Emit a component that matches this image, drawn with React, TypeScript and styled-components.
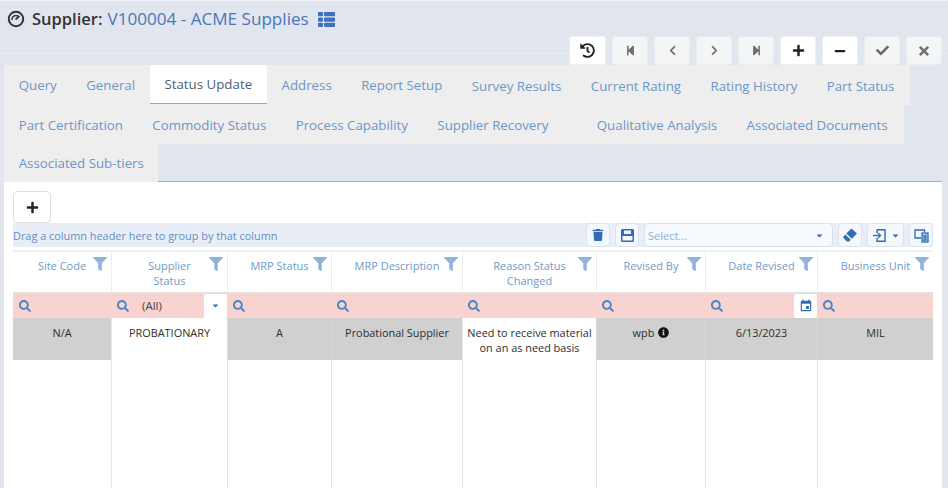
import React from "react";
import styled, { createGlobalStyle } from "styled-components";
import {
  FaCaretDown,
  FaCheck,
  FaChevronLeft,
  FaChevronRight,
  FaFilter,
  FaHistory,
  FaInfoCircle,
  FaMinus,
  FaPlus,
  FaSearch,
  FaStepBackward,
  FaStepForward,
  FaThList,
  FaTimes,
  FaTrash,
} from "react-icons/fa";
import { MdEvent } from "react-icons/md";

const GlobalStyle = createGlobalStyle`
  html, body {
    margin: 0;
    padding: 0;
    height: 100%;
  }
  body {
    font-family: "Open Sans", "Liberation Sans", sans-serif;
    overflow: hidden;
  }
  #root {
    height: 100%;
  }
`;

const Page = styled.div`
  width: 948px;
  height: 488px;
  background: #e1e6ee;
  border-top: 1px solid #f1f3f6;
  box-sizing: border-box;
  display: flex;
  flex-direction: column;
  overflow: hidden;
`;

const TitleRow = styled.div`
  height: 53px;
  box-sizing: border-box;
  padding: 8px 0 0 7px;
  display: flex;
  align-items: flex-start;
  border-bottom: 1px solid #e9edf3;
  line-height: 20px;
`;

const TitleGauge = styled.span`
  display: flex;
  padding-top: 1px;
`;

const TitleLabel = styled.span`
  font-size: 16.5px;
  font-weight: 600;
  color: #333;
  margin: 0 5px 0 7px;
`;

const TitleValue = styled.span`
  font-size: 17.1px;
  color: #4a76b8;
  margin-right: 9px;
`;

const TitleIcon = styled.span`
  display: flex;
  color: #3f6fbd;
  font-size: 17px;
  padding-top: 2px;
`;

const Toolbar = styled.div`
  display: flex;
  justify-content: flex-end;
  gap: 6px;
  padding-right: 6px;
  margin-top: -18px;
  height: 29px;
`;

const ToolButton = styled.button<{ $active?: boolean; $wide?: boolean }>`
  width: ${(p) => (p.$wide ? "37px" : "36px")};
  height: 29px;
  padding: 0;
  border: 1px solid ${(p) => (p.$active ? "#f0f1f3" : "#e9ebef")};
  border-radius: 3px;
  background: ${(p) => (p.$active ? "#fff" : "#f4f5f7")};
  color: ${(p) => (p.$active ? "#222" : "#6f6f6f")};
  display: flex;
  align-items: center;
  justify-content: center;
  font-size: 13px;
`;

const TabRow = styled.div<{ $end: number; $height: number; $over?: boolean }>`
  width: ${(p) => p.$end - 4}px;
  height: ${(p) => p.$height}px;
  margin: 0 0 ${(p) => (p.$over ? "-1px" : "0")} 4px;
  position: ${(p) => (p.$over ? "relative" : "static")};
  background: #eeeeee;
  font-size: 13.3px;
  display: flex;
  flex-shrink: 0;
`;

const Tab = styled.div<{ $active?: boolean; $gap?: number; $low?: boolean }>`
  padding: ${(p) => (p.$low ? "2px" : "0")} 14.7px 0;
  margin-left: ${(p) => p.$gap ?? 0}px;
  display: flex;
  align-items: center;
  white-space: nowrap;
  color: ${(p) => (p.$active ? "#4d5f75" : "#6c97c8")};
  background: ${(p) => (p.$active ? "#fff" : "transparent")};
  border-bottom: ${(p) => (p.$active ? "1px solid #8aaad4" : "none")};
  border-radius: ${(p) => (p.$active ? "3px 3px 0 0" : "0")};
  height: ${(p) => (p.$active ? "38px" : "auto")};
`;

const Panel = styled.div`
  flex: 1;
  min-height: 0;
  margin: 0 6px 0 4px;
  padding: 9px 9px 0;
  background: #fff;
  border-top: 1px solid #98b2d6;
  display: flex;
  flex-direction: column;
`;

const AddButton = styled.button`
  width: 38px;
  height: 32px;
  padding: 0;
  flex-shrink: 0;
  border: 1px solid #dcdfe4;
  border-radius: 4px;
  background: #fff;
  color: #222;
  font-size: 13px;
  display: flex;
  align-items: center;
  justify-content: center;
`;

const GroupBar = styled.div`
  height: 24px;
  flex-shrink: 0;
  background: #e9eef6;
  display: flex;
  align-items: center;
  gap: 5px;
`;

const GroupHint = styled.span`
  flex: 1;
  font-size: 10.9px;
  color: #5f8ec8;
  white-space: nowrap;
`;

const BarButton = styled.button<{ $width: number }>`
  width: ${(p) => p.$width}px;
  height: 24px;
  padding: 0;
  box-sizing: border-box;
  border: 1px solid #dbe3ee;
  border-radius: 4px;
  background: #f4f7fb;
  color: #2f6db5;
  font-size: 12px;
  display: flex;
  align-items: center;
  justify-content: center;
  gap: 4px;
`;

const SelectBox = styled.div`
  width: 189px;
  height: 24px;
  box-sizing: border-box;
  padding: 0 8px 0 3px;
  border: 1px solid #d5e2f2;
  border-radius: 4px;
  background: #f6f9fd;
  color: #8fb0dc;
  font-size: 11px;
  display: flex;
  align-items: center;
  justify-content: space-between;
`;

const Caret = styled.span`
  display: flex;
  font-size: 9px;
  color: #2f6db5;
`;

const Table = styled.div`
  flex: 1;
  min-height: 0;
  margin-top: 3px;
  border-top: 2px solid #f1f1f1;
  display: grid;
  grid-template-columns: 98px 116px 104px 131px 134px 109px 112px 116px;
  grid-template-rows: 41px 25px 42px 1fr;
`;

const HeadCell = styled.div<{ $first?: boolean }>`
  box-sizing: border-box;
  padding: 4px 4px 0 18px;
  display: flex;
  align-items: flex-start;
  border-left: ${(p) => (p.$first ? "none" : "1px solid #ececec")};
  border-bottom: 1px solid #e4e4e4;
`;

const HeadText = styled.span`
  flex: 1;
  text-align: center;
  white-space: pre-line;
  font-size: 11px;
  line-height: 15px;
  color: #6f9ac9;
  padding-top: 2px;
`;

const FunnelIcon = styled.span`
  display: flex;
  color: #8fb3dc;
  font-size: 14px;
  padding-top: 1px;
`;

const FilterCell = styled.div`
  background: #f9d3cf;
  display: flex;
  align-items: center;
  padding-left: 6px;
  font-size: 12px;
  color: #444;
`;

const SearchIcon = styled.span`
  display: flex;
  color: #4a85c5;
  font-size: 12px;
`;

const FilterValue = styled.span`
  flex: 1;
  margin-left: 13px;
  font-size: 11.5px;
`;

const FilterAddon = styled.span`
  width: 23px;
  height: 24px;
  margin-left: auto;
  background: #fff;
  border-radius: 2px;
  color: #2f6db5;
  display: flex;
  align-items: center;
  justify-content: center;
`;

const DataCell = styled.div<{ $plain?: boolean; $first?: boolean }>`
  box-sizing: border-box;
  padding: 7px 2px 0;
  text-align: center;
  white-space: pre-line;
  font-size: 10.9px;
  line-height: 15px;
  color: #2e2e2e;
  background: ${(p) => (p.$plain ? "#fff" : "#d0d0d0")};
  border-left: ${(p) =>
    p.$first ? "none" : `1px solid ${p.$plain ? "#e6e6e6" : "#dadada"}`};
`;

const InfoIcon = styled.span`
  display: inline-flex;
  vertical-align: -1px;
  margin-left: 4px;
  font-size: 11px;
  color: #111;
`;

const EmptyCell = styled.div<{ $first?: boolean }>`
  border-left: ${(p) => (p.$first ? "none" : "1px solid #e6e6e6")};
`;

const GaugeIcon = () => (
  <svg width="18" height="18" viewBox="0 0 18 18" fill="none" stroke="#333">
    <circle cx="9" cy="9" r="7.2" strokeWidth="2" />
    <path d="M5 10a4 4 0 0 1 6-4" strokeWidth="1.5" />
    <path d="M8.500 9.500 12.500 6" strokeWidth="1.700" />
  </svg>
);

const SaveIcon = () => (
  <svg width="15" height="15" viewBox="0 0 15 15" fill="#2f6db5">
    <path d="M1 2.500C1 1.700 1.700 1 2.500 1h10c.8 0 1.500.7 1.500 1.500v10c0 .8-.7 1.500-1.500 1.500h-10C1.700 14 1 13.300 1 12.500ZM4 2.500V6h7V2.500ZM2.500 8v4.500h10V8Z" fillRule="evenodd" />
  </svg>
);

const EraserIcon = () => (
  <svg width="16" height="16" viewBox="0 0 16 16" fill="#2f6db5">
    <path d="M9.500 1.500 15 6.500 9.800 11.700 4.300 6.600Z" />
    <path d="M3.400 7.600 8.800 12.700 7 14.500H4.800L1 10.300Z" />
  </svg>
);

const ExportIcon = () => (
  <svg width="15" height="15" viewBox="0 0 15 15" fill="none" stroke="#2f6db5" strokeWidth="1.4">
    <path d="M5 1.700h8v11.600H5V10" />
    <path d="M5 5V1.700" />
    <path d="M1 7.500h7" />
    <path d="M6 5l2.500 2.500L6 10" />
  </svg>
);

const ChooserIcon = () => (
  <svg width="15" height="15" viewBox="0 0 15 15" fill="none" stroke="#2f6db5" strokeWidth="1.300">
    <path d="M10.500 4V2H1v8h6" />
    <rect x="8" y="5" width="6" height="9" fill="#2f6db5" fillOpacity=".35" />
    <path d="M9.500 8h3M9.500 10h3M9.500 12h3" />
  </svg>
);

const tabRows = [
  {
    end: 910,
    height: 40,
    tabs: [
      { label: "Query" },
      { label: "General" },
      { label: "Status Update", active: true },
      { label: "Address" },
      { label: "Report Setup" },
      { label: "Survey Results", low: true },
      { label: "Current Rating", low: true },
      { label: "Rating History", low: true },
      { label: "Part Status", low: true },
    ],
  },
  {
    end: 904,
    height: 39,
    tabs: [
      { label: "Part Certification" },
      { label: "Commodity Status" },
      { label: "Process Capability" },
      { label: "Supplier Recovery" },
      { label: "Qualitative Analysis", gap: 19 },
      { label: "Associated Documents" },
    ],
  },
  {
    end: 158,
    height: 38,
    over: true,
    tabs: [{ label: "Associated Sub-tiers" }],
  },
];

const columns = [
  { title: "Site Code", value: "N/A" },
  { title: "Supplier\nStatus", value: "PROBATIONARY", plain: true, filter: "(All)", addon: "caret" },
  { title: "MRP Status", value: "A" },
  { title: "MRP Description", value: "Probational Supplier" },
  { title: "Reason Status\nChanged", value: "Need to receive material\non an as need basis", plain: true },
  { title: "Revised By", value: "wpb", info: true },
  { title: "Date Revised", value: "6/13/2023", addon: "date" },
  { title: "Business Unit", value: "MIL" },
];

export default function App() {
  return (
    <Page>
      <GlobalStyle />
      <TitleRow>
        <TitleGauge>
          <GaugeIcon />
        </TitleGauge>
        <TitleLabel>Supplier:</TitleLabel>
        <TitleValue>V100004 - ACME Supplies</TitleValue>
        <TitleIcon>
          <FaThList />
        </TitleIcon>
      </TitleRow>
      <Toolbar>
        <ToolButton $active $wide>
          <FaHistory size={15} />
        </ToolButton>
        <ToolButton>
          <FaStepBackward size={11} />
        </ToolButton>
        <ToolButton>
          <FaChevronLeft size={11} />
        </ToolButton>
        <ToolButton>
          <FaChevronRight size={11} />
        </ToolButton>
        <ToolButton>
          <FaStepForward size={11} />
        </ToolButton>
        <ToolButton $active>
          <FaPlus size={13} />
        </ToolButton>
        <ToolButton $active>
          <FaMinus size={12} />
        </ToolButton>
        <ToolButton>
          <FaCheck size={13} />
        </ToolButton>
        <ToolButton>
          <FaTimes size={14} />
        </ToolButton>
      </Toolbar>

      {tabRows.map((row: any) => (
        <TabRow key={row.end} $end={row.end} $height={row.height} $over={row.over}>
          {row.tabs.map((t: any) => (
            <Tab key={t.label} $active={t.active} $gap={t.gap} $low={t.low}>
              {t.label}
            </Tab>
          ))}
        </TabRow>
      ))}

      <Panel>
        <AddButton>
          <FaPlus size={13} />
        </AddButton>
        <GroupBar>
          <GroupHint>Drag a column header here to group by that column</GroupHint>
          <BarButton $width={24}>
            <FaTrash size={12} />
          </BarButton>
          <BarButton $width={24}>
            <SaveIcon />
          </BarButton>
          <SelectBox>
            Select...
            <Caret>
              <FaCaretDown />
            </Caret>
          </SelectBox>
          <BarButton $width={24}>
            <EraserIcon />
          </BarButton>
          <BarButton $width={37}>
            <ExportIcon />
            <Caret>
              <FaCaretDown />
            </Caret>
          </BarButton>
          <BarButton $width={24}>
            <ChooserIcon />
          </BarButton>
        </GroupBar>

        <Table>
          {columns.map((c, i) => (
            <HeadCell key={c.title} $first={i === 0}>
              <HeadText>{c.title}</HeadText>
              <FunnelIcon>
                <FaFilter />
              </FunnelIcon>
            </HeadCell>
          ))}
          {columns.map((c) => (
            <FilterCell key={c.title}>
              <SearchIcon>
                <FaSearch />
              </SearchIcon>
              {c.filter && <FilterValue>{c.filter}</FilterValue>}
              {c.addon === "caret" && (
                <FilterAddon>
                  <Caret>
                    <FaCaretDown />
                  </Caret>
                </FilterAddon>
              )}
              {c.addon === "date" && (
                <FilterAddon>
                  <MdEvent size={14} />
                </FilterAddon>
              )}
            </FilterCell>
          ))}
          {columns.map((c, i) => (
            <DataCell key={c.title} $plain={c.plain} $first={i === 0}>
              {c.value}
              {c.info && (
                <InfoIcon>
                  <FaInfoCircle />
                </InfoIcon>
              )}
            </DataCell>
          ))}
          {columns.map((c, i) => (
            <EmptyCell key={c.title} $first={i === 0} />
          ))}
        </Table>
      </Panel>
    </Page>
  );
}
